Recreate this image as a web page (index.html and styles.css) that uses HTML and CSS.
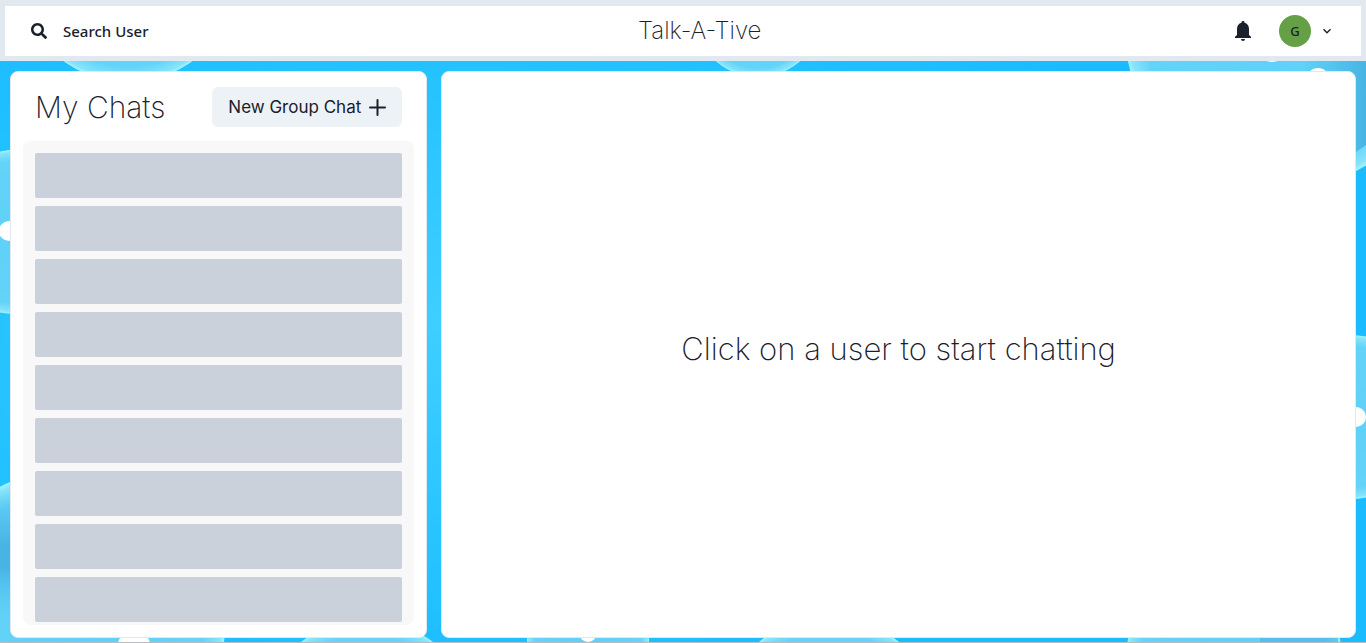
FILE: index.html
```html
<!DOCTYPE html>
<html lang="en">
<head>
<meta charset="utf-8">
<meta name="viewport" content="width=device-width, initial-scale=1">
<title>Talk-A-Tive</title>
<link rel="stylesheet" href="styles.css">
</head>
<body>
<svg class="backdrop" viewBox="0 0 1366 643" preserveAspectRatio="none" aria-hidden="true">
  <defs>
    <radialGradient id="sky" cx=".35" cy=".5" r=".6">
      <stop offset="0" stop-color="#40cfff"/><stop offset=".7" stop-color="#22c1ff"/><stop offset="1" stop-color="#1abbff"/>
    </radialGradient>
    <radialGradient id="bubble">
      <stop offset="0" stop-color="#5fd0f7"/><stop offset=".86" stop-color="#63d3f8"/><stop offset=".97" stop-color="#86e4fa"/><stop offset="1" stop-color="#a5f5fd"/>
    </radialGradient>
    <linearGradient id="shade" x1="0" x2="1">
      <stop offset="0" stop-color="#48b4e4" stop-opacity="0"/><stop offset=".5" stop-color="#48b4e4" stop-opacity="0"/><stop offset="1" stop-color="#48b4e4"/>
    </linearGradient>
    <linearGradient id="band" x1="0" y1="0" x2="0" y2="1">
      <stop offset=".05" stop-color="#48b4e4" stop-opacity="0"/><stop offset=".4" stop-color="#48b4e4"/><stop offset=".55" stop-color="#48b4e4"/><stop offset=".9" stop-color="#5ccdf5" stop-opacity="0"/>
    </linearGradient>
  </defs>
  <rect width="1366" height="643" fill="url(#sky)"/>
  <g fill="url(#bubble)">
    <circle cx="128" cy="-28" r="110"/>
    <circle cx="758" cy="13" r="64"/>
    <circle cx="1283" cy="31" r="158"/>
    <circle cx="15" cy="232" r="82"/>
    <circle cx="1350" cy="417" r="82"/>
    <circle cx="70" cy="625" r="155"/>
    <circle cx="367" cy="730" r="110"/>
    <circle cx="588" cy="640" r="61"/>
    <circle cx="829" cy="728" r="111"/>
    <circle cx="1234" cy="660" r="108"/>
  </g>
  <path d="M1240 61H1366V145L1356 152V80H1240Z" fill="url(#shade)"/>
  <path d="M0 490L10 483V638H0Z" fill="url(#band)"/>
  <path d="M1260 638H1338V643H1260Z" fill="#48b4e4" opacity=".6"/>
  <g fill="#fff">
    <circle cx="9" cy="231" r="10"/>
    <circle cx="1356" cy="417" r="10"/>
    <circle cx="134" cy="648" r="17"/>
    <circle cx="588" cy="633" r="9"/>
    <circle cx="1318" cy="80" r="12"/>
    <circle cx="1272" cy="50" r="12"/>
  </g>
</svg>
<div class="app">
  <header class="topbar">
    <button class="search" type="button">
      <svg class="search-icon" viewBox="0 0 512 512" aria-hidden="true"><path fill="currentColor" d="M505 442.700L405.300 343c-4.500-4.500-10.600-7-17-7H372c27.600-35.300 44-79.700 44-128C416 93.100 322.900 0 208 0S0 93.100 0 208s93.100 208 208 208c48.300 0 92.700-16.400 128-44v16.300c0 6.400 2.500 12.500 7 17l99.700 99.700c9.400 9.400 24.600 9.400 33.900 0l28.300-28.300c9.400-9.400 9.400-24.600.1-34zM208 336c-70.700 0-128-57.200-128-128 0-70.700 57.200-128 128-128 70.700 0 128 57.200 128 128 0 70.700-57.200 128-128 128z"/></svg>
      <span>Search User</span>
    </button>
    <h1 class="brand">Talk-A-Tive</h1>
    <div class="actions">
      <button class="bell" type="button" aria-label="Notifications">
        <svg viewBox="0 0 16 20" aria-hidden="true"><path fill="currentColor" d="M8 0a1.500 1.500 0 0 1 1.500 1.700C12.400 2.400 14 4.700 14 8v6l2 1.700V17H0v-1.300L2 14V8c0-3.300 1.600-5.600 4.500-6.300A1.500 1.500 0 0 1 8 0zM6 18h4a2 2 0 0 1-4 0z"/></svg>
      </button>
      <button class="account" type="button" aria-label="Account menu">
        <span class="avatar">G</span>
        <svg class="chevron" viewBox="0 0 24 24" aria-hidden="true"><path fill="currentColor" d="M16.590 8.590L12 13.170 7.410 8.590 6 10l6 6 6-6z"/></svg>
      </button>
    </div>
  </header>
  <main class="content">
    <section class="panel chats">
      <div class="chats-head">
        <h2 class="title">My Chats</h2>
        <button class="new-group" type="button">
          <span>New Group Chat</span>
          <svg viewBox="0 0 17 17" aria-hidden="true"><path d="M8.500 1v15M1 8.500h15" fill="none" stroke="currentColor" stroke-width="2" stroke-linecap="round"/></svg>
        </button>
      </div>
      <div class="list" aria-busy="true">
        <div class="skeleton"></div><div class="skeleton"></div><div class="skeleton"></div>
        <div class="skeleton"></div><div class="skeleton"></div><div class="skeleton"></div>
        <div class="skeleton"></div><div class="skeleton"></div><div class="skeleton"></div>
      </div>
    </section>
    <section class="panel chat">
      <p class="empty">Click on a user to start chatting</p>
    </section>
  </main>
</div>
</body>
</html>
```
FILE: styles.css
```css
* { box-sizing: border-box; }
body {
  margin: 0;
  color: #1a202c;
  font-family: Inter, "Liberation Sans", sans-serif;
  font-weight: 300;
}
h1, h2, p { margin: 0; font-weight: 200; }
button {
  border: 0;
  padding: 0;
  background: none;
  color: inherit;
  font: inherit;
  display: flex;
  align-items: center;
  cursor: pointer;
}
.backdrop {
  position: fixed;
  inset: 0;
  width: 100%;
  height: 100%;
  z-index: -1;
}
.app {
  display: flex;
  flex-direction: column;
  height: 100vh;
  border-bottom: 1px solid #b9bdc2;
}
.topbar {
  display: flex;
  justify-content: space-between;
  align-items: center;
  padding: 5px 10px;
  background: #fff;
  border: 5px solid #e2e8f0;
  border-top-width: 6px;
}
.search {
  gap: 16px;
  height: 40px;
  padding: 0 16px;
  font: 500 15px "Noto Sans", sans-serif;
}
.search-icon { width: 16px; height: 16px; }
.brand { font-size: 24px; line-height: 30px; }
.actions { display: flex; align-items: center; gap: 28px; }
.bell svg { width: 16px; height: 20px; }
.account { gap: 8px; padding-right: 16px; }
.avatar {
  display: grid;
  place-items: center;
  width: 32px;
  height: 32px;
  border-radius: 50%;
  background: #65a046;
  font: 500 13px "Noto Sans", sans-serif;
}
.chevron { width: 16px; height: 16px; }
.content {
  flex: 1;
  min-height: 0;
  display: flex;
  gap: 14px;
  padding: 10px 10px 4px;
}
.panel {
  background: #fff;
  border: 1px solid #e2e8f0;
  border-radius: 8px;
}
.chats {
  flex: 0 0 31%;
  display: flex;
  flex-direction: column;
  padding: 15px 12px 12px;
}
.chats-head {
  display: flex;
  align-items: center;
  justify-content: space-between;
  padding: 0 12px;
  margin-bottom: 14px;
}
.title, .empty { line-height: 40px; white-space: nowrap; }
.title { font-size: 30px; }
.empty { font-size: 31px; }
.new-group {
  gap: 8px;
  height: 40px;
  padding: 0 16px;
  border-radius: 6px;
  background: #edf2f7;
  font-size: 17px;
  font-weight: 400;
  white-space: nowrap;
}
.new-group svg { width: 17px; height: 17px; }
.list {
  flex: 1;
  min-height: 0;
  display: flex;
  flex-direction: column;
  gap: 8px;
  padding: 12px 12px 3px;
  border-radius: 8px;
  background: #f8f8f8;
  overflow: hidden;
}
.skeleton { flex: 0 0 45px; border-radius: 2px; background: #cad1db; }
.chat {
  flex: 1;
  display: flex;
  align-items: center;
  justify-content: center;
}
.chat .empty { padding-bottom: 12px; }
```
